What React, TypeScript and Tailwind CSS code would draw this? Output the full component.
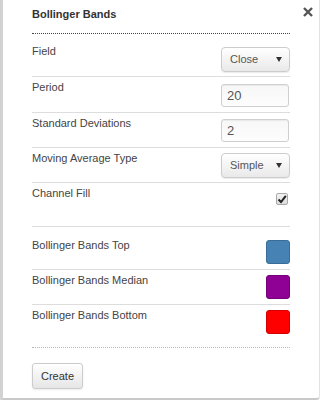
import React from "react";

function Select({ value }: { value: string }) {
  return (
    <div className="flex h-[25px] w-[69px] items-center justify-between rounded-[4px] border border-[#cccccc] bg-gradient-to-b from-[#ffffff] to-[#e9e9e9] pl-[8px] pr-[7px] text-[11px] text-[#555555] shadow-[0_1px_1px_rgba(0,0,0,0.08)]">
      <span>{value}</span>
      <svg width="6" height="5" viewBox="0 0 6 5">
        <path d="M0 0 L6 0 L3 5 Z" fill="#333333" />
      </svg>
    </div>
  );
}

function Input({ value }: { value: string }) {
  return (
    <div className="mr-[1px] flex h-[23px] w-[68px] items-center rounded-[3px] border border-[#cfcfcf] bg-gradient-to-b from-[#f7f7f7] to-[#fdfdfd] pl-[5px] text-[13px] text-[#555555] shadow-[inset_0_1px_1px_rgba(0,0,0,0.06)]">
      {value}
    </div>
  );
}

function Swatch({ color, border }: { color: string; border: string }) {
  return (
    <div
      className="h-[24px] w-[24px] rounded-[3px] border"
      style={{ backgroundColor: color, borderColor: border }}
    />
  );
}

export default function App() {
  return (
    <div className="font-['Liberation_Sans',Arial,sans-serif] text-[11px] text-[#444444]">
      <div className="relative h-[400px] w-[320px] rounded-br-[4px] border-b-[2px] border-l-[3px] border-r border-b-[#c9c9c9] border-l-[#d2d2d2] border-r-[#e2e2e2] bg-white px-[29px]">
        <button className="absolute right-[6px] top-[7px] flex h-[10px] w-[10px] items-center justify-center">
          <svg width="10" height="10" viewBox="0 0 10 10">
            <path d="M1 1 L9 9 M9 1 L1 9" stroke="#555555" strokeWidth="2.4" />
          </svg>
        </button>

        <div className="pt-[8px] text-[11px] font-bold leading-[13px] text-[#333333]">Bollinger Bands</div>
        <div className="mt-[12px] border-t border-dotted border-[#444444]" />

        <div className="flex h-[43px] items-start justify-between border-b border-[#dddddd]">
          <div className="pt-[11px] leading-[13px]">Field</div>
          <div className="mt-[13px]">
            <Select value="Close" />
          </div>
        </div>

        <div className="flex h-[36px] items-start justify-between border-b border-[#dddddd]">
          <div className="pt-[4px] leading-[13px]">Period</div>
          <div className="mt-[7px]">
            <Input value="20" />
          </div>
        </div>

        <div className="flex h-[35px] items-start justify-between border-b border-[#dddddd]">
          <div className="pt-[4px] leading-[13px]">Standard Deviations</div>
          <div className="mt-[6px]">
            <Input value="2" />
          </div>
        </div>

        <div className="flex h-[35px] items-start justify-between border-b border-[#dddddd]">
          <div className="pt-[4px] leading-[13px]">Moving Average Type</div>
          <div className="mt-[5px]">
            <Select value="Simple" />
          </div>
        </div>

        <div className="flex h-[44px] items-start justify-between border-b border-[#dddddd]">
          <div className="pt-[4px] leading-[13px]">Channel Fill</div>
          <div className="mr-[2px] mt-[10px] flex h-[12px] w-[12px] items-center justify-center rounded-[2px] border border-[#a9a9a9] bg-gradient-to-b from-[#f2f2f2] to-[#dcdcdc]">
            <svg width="10" height="10" viewBox="0 0 10 10">
              <path d="M1.5 5.5 L4 8 L8.8 1.8" stroke="#222222" strokeWidth="2" fill="none" />
            </svg>
          </div>
        </div>

        <div className="flex h-[43px] items-start justify-between border-b border-[#dddddd]">
          <div className="pt-[12px] leading-[13px]">Bollinger Bands Top</div>
          <div className="mt-[13px]">
            <Swatch color="#4682b4" border="#3a6d97" />
          </div>
        </div>

        <div className="flex h-[35px] items-start justify-between border-b border-[#dddddd]">
          <div className="pt-[4px] leading-[13px]">Bollinger Bands Median</div>
          <div className="mt-[5px]">
            <Swatch color="#8f0094" border="#74007a" />
          </div>
        </div>

        <div className="flex h-[42px] items-start justify-between">
          <div className="pt-[4px] leading-[13px]">Bollinger Bands Bottom</div>
          <div className="mt-[5px]">
            <Swatch color="#ff0000" border="#d60000" />
          </div>
        </div>

        <div className="border-t border-dotted border-[#b5b5b5]" />

        <button className="mt-[15px] h-[26px] w-[51px] rounded-[3px] border border-[#cccccc] bg-gradient-to-b from-[#ffffff] to-[#e6e6e6] text-[11px] text-[#333333] shadow-[0_1px_2px_rgba(0,0,0,0.08)]">
          Create
        </button>
      </div>
    </div>
  );
}
